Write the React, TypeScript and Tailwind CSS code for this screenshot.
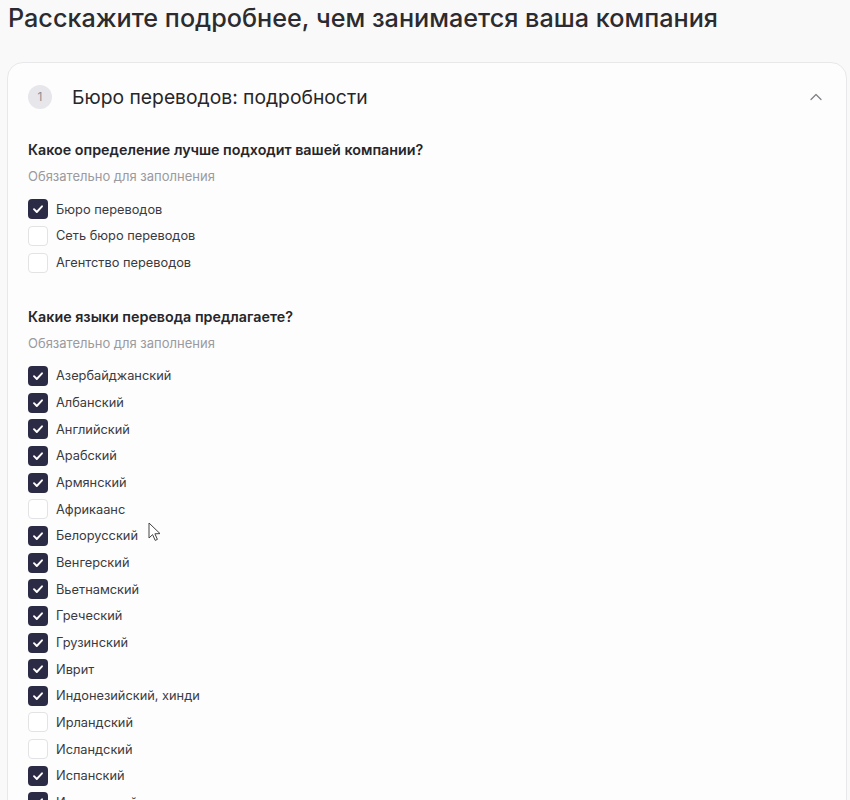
import { ChevronUp } from 'lucide-react';

const companyTypes = [
  { label: 'Бюро переводов', checked: true },
  { label: 'Сеть бюро переводов', checked: false },
  { label: 'Агентство переводов', checked: false },
];

const languages = [
  { label: 'Азербайджанский', checked: true },
  { label: 'Албанский', checked: true },
  { label: 'Английский', checked: true },
  { label: 'Арабский', checked: true },
  { label: 'Армянский', checked: true },
  { label: 'Африкаанс', checked: false },
  { label: 'Белорусский', checked: true },
  { label: 'Венгерский', checked: true },
  { label: 'Вьетнамский', checked: true },
  { label: 'Греческий', checked: true },
  { label: 'Грузинский', checked: true },
  { label: 'Иврит', checked: true },
  { label: 'Индонезийский, хинди', checked: true },
  { label: 'Ирландский', checked: false },
  { label: 'Исландский', checked: false },
  { label: 'Испанский', checked: true },
  { label: 'Итальянский', checked: true },
];

const CheckRow = ({ label, checked }: { label: string; checked: boolean }) => (
  <label className="h-[26.67px] flex items-center gap-2 cursor-pointer">
    {checked ? (
      <span className="w-5 h-5 rounded-[4px] bg-[#2c2b46] flex items-center justify-center shrink-0">
        <svg width="14" height="14" viewBox="0 0 14 14" fill="none">
          <path d="M3 7.2 L5.8 10 L11 4.3" stroke="white" strokeWidth="1.9" strokeLinecap="round" strokeLinejoin="round" />
        </svg>
      </span>
    ) : (
      <span className="w-5 h-5 rounded-[4px] border border-[#e3e3e6] bg-white shrink-0" />
    )}
    <span className="text-[12.8px] text-[#3a3a3f]">{label}</span>
  </label>
);

const Question = ({ title, items }: { title: string; items: { label: string; checked: boolean }[] }) => (
  <div className="flex flex-col">
    <h3 className="text-[14.3px] leading-5 font-semibold text-[#26262b]">{title}</h3>
    <p className="mt-[7px] text-[13px] leading-[18px] text-[#9a9a9f]">Обязательно для заполнения</p>
    <div className="mt-[11px] flex flex-col">
      {items.map((item) => (
        <CheckRow key={item.label} {...item} />
      ))}
    </div>
  </div>
);

const App = () => {
  return (
    <div
      className="relative min-h-screen h-[800px] overflow-hidden bg-[#f9f9f9]"
      style={{ fontFamily: 'Inter, "Noto Sans", sans-serif' }}
    >
      <h1 className="pl-2 text-[25.2px] leading-9 font-medium text-[#2b2b30]">
        Расскажите подробнее, чем занимается ваша компания
      </h1>

      <div className="mt-[26px] ml-[7px] w-[840px] rounded-2xl border border-[#e8e8ea] bg-[#fdfdfd] pt-[22px] pl-[20px] pr-[20px]">
        {/* Section header */}
        <div className="flex items-center h-6">
          <span className="w-6 h-6 rounded-full bg-[#e6e6eb] text-[#8d8d94] text-[12px] flex items-center justify-center">
            1
          </span>
          <h2 className="ml-5 text-[19.3px] font-normal text-[#26262b]">Бюро переводов: подробности</h2>
          <ChevronUp className="ml-auto w-5 h-5 text-[#808086]" strokeWidth={1.5} />
        </div>

        <div className="mt-[31px] flex flex-col gap-[30.67px]">
          <Question title="Какое определение лучше подходит вашей компании?" items={companyTypes} />
          <Question title="Какие языки перевода предлагаете?" items={languages} />
        </div>
      </div>

      {/* mouse pointer */}
      <svg className="absolute left-[148px] top-[522px]" width="14" height="20" viewBox="0 0 14 20" fill="none">
        <path d="M1 1 L1 16 L4.6 12.6 L7.2 18.4 L9.4 17.4 L6.9 11.8 L12 11.6 Z" fill="white" stroke="#444" strokeWidth="1" strokeLinejoin="round" />
      </svg>
    </div>
  );
};

export default App;
